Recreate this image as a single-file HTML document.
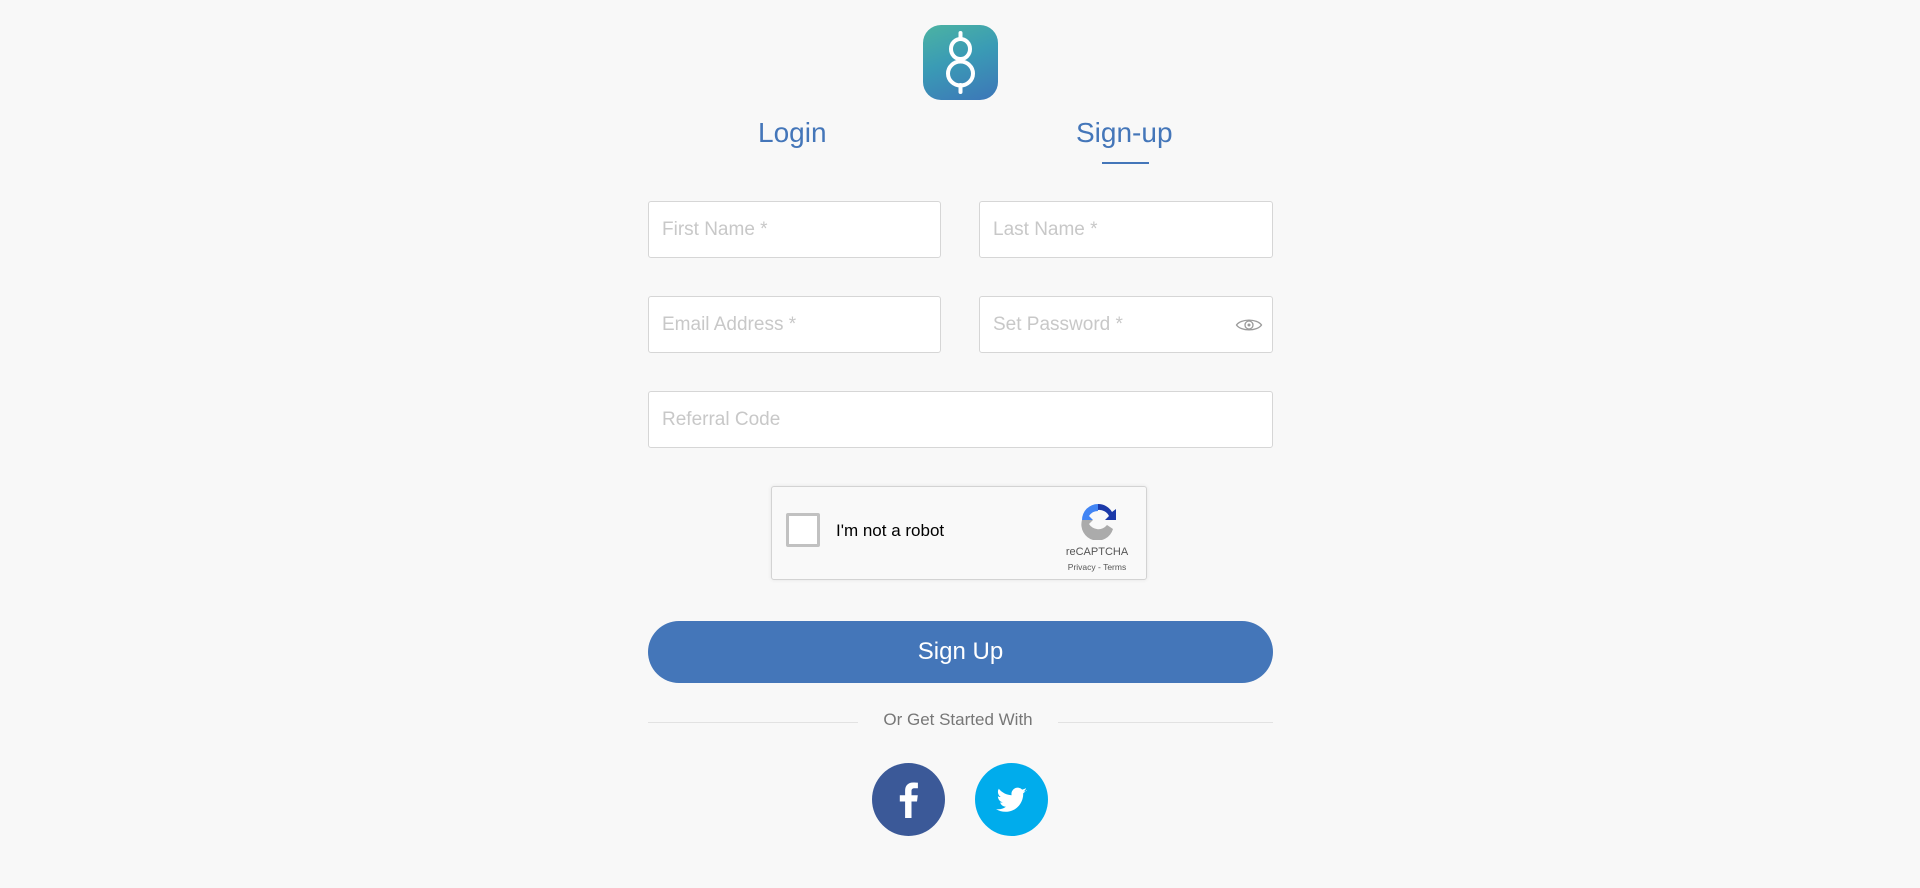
<!DOCTYPE html>
<html><head><meta charset="utf-8">
<style>
*{box-sizing:border-box;margin:0;padding:0}
body{width:1920px;height:888px;background:#f8f8f8;font-family:"Liberation Sans",sans-serif;position:relative;overflow:hidden}
.abs{position:absolute}
.logo{left:923px;top:25px;width:75px;height:75px;border-radius:18px;background:linear-gradient(160deg,#4cb3a2 0%,#3a9bb5 45%,#3d76b8 100%)}
.tab{font-size:28px;color:#4476b9;top:117px}
.inp{background:#fff;border:1px solid #d6d6d6;border-radius:3px;height:57px;padding-left:13px;font-size:19px;color:#c8c8c8;line-height:55px}
.cap{left:771px;top:486px;width:376px;height:94px;border:1px solid #d3d3d3;border-radius:3px;background:#f9f9f9;box-shadow:0 0 4px rgba(0,0,0,.08)}
.btn{left:648px;top:621px;width:625px;height:62px;border-radius:31px;background:#4476b9;color:#fff;font-size:24px;text-align:center;line-height:62px}
.circ{width:73px;height:73px;border-radius:50%;top:763px}
</style></head><body>
<div class="abs logo">
<svg width="75" height="75" viewBox="0 0 75 75"><g fill="none" stroke="#fff" stroke-width="4" stroke-linecap="round"><ellipse cx="37.5" cy="24" rx="9.5" ry="10"/><ellipse cx="37.5" cy="48.5" rx="12.5" ry="12"/><line x1="37.5" y1="8" x2="37.5" y2="14"/><line x1="37.5" y1="60" x2="37.5" y2="67"/></g></svg>
</div>
<div class="abs tab" style="left:758px">Login</div>
<div class="abs tab" style="left:1076px">Sign-up</div>
<div class="abs" style="left:1102px;top:162px;width:47px;height:2px;background:#4476b9"></div>

<div class="abs inp" style="left:648px;top:201px;width:293px">First Name *</div>
<div class="abs inp" style="left:979px;top:201px;width:294px">Last Name *</div>
<div class="abs inp" style="left:648px;top:296px;width:293px">Email Address *</div>
<div class="abs inp" style="left:979px;top:296px;width:294px">Set Password *
<svg class="abs" style="left:255px;top:20px" width="28" height="16" viewBox="0 0 28 16"><path d="M1.5 8C6 1.5 22 1.5 26.5 8C22 14.5 6 14.5 1.5 8Z" fill="none" stroke="#9a9a9a" stroke-width="1.3"/><circle cx="14" cy="8" r="4" fill="none" stroke="#9a9a9a" stroke-width="1.3"/><circle cx="14" cy="8" r="1.5" fill="#9a9a9a"/></svg></div>
<div class="abs inp" style="left:648px;top:391px;width:625px">Referral Code</div>

<div class="abs cap">
<div class="abs" style="left:14px;top:26px;width:34px;height:34px;border:3px solid #c1c1c1;border-radius:2px;background:#fff"></div>
<div class="abs" style="left:64px;top:34px;font-size:17px;color:#000;font-family:'Liberation Sans',sans-serif">I'm not a robot</div>
<svg class="abs" style="left:306px;top:13px" width="40" height="40" viewBox="0 0 40 40"><path d="M20 4a16 16 0 0 1 14 8l4-3v11H27l4-4a11 11 0 0 0-11-6z" fill="#1c3aa9"/><path d="M4 20A16 16 0 0 1 20 4v7a11 11 0 0 0-9 5l4 4H4z" fill="#4285f4"/><path d="M4 20h11l-4 4a11 11 0 0 0 18 1l6 4A16 16 0 0 1 4 20z" fill="#ababab"/></svg>
<div class="abs" style="left:290px;top:59px;width:70px;text-align:center;font-size:11px;color:#555">reCAPTCHA</div>
<div class="abs" style="left:290px;top:75px;width:70px;text-align:center;font-size:8.5px;color:#555">Privacy - Terms</div>
</div>

<div class="abs btn">Sign Up</div>
<div class="abs" style="left:648px;top:722px;width:210px;height:1px;background:#e2e2e2"></div>
<div class="abs" style="left:1058px;top:722px;width:215px;height:1px;background:#e2e2e2"></div>
<div class="abs" style="left:858px;top:710px;width:200px;text-align:center;font-size:17px;color:#777">Or Get Started With</div>

<div class="abs circ" style="left:872px;background:#3b5998">
<svg width="73" height="73" viewBox="0 0 73 73"><path d="M39.5 55V38.5h5.5l.8-6.2h-6.3v-4c0-1.8.5-3 3.1-3h3.3v-5.6c-.6-.1-2.5-.2-4.8-.2-4.7 0-8 2.9-8 8.2v4.6h-5.3v6.2h5.3V55z" fill="#fff"/></svg></div>
<div class="abs circ" style="left:975px;background:#00acec">
<svg width="73" height="73" viewBox="0 0 73 73"><path d="M52 27.5c-1.1.5-2.3.8-3.6 1 1.3-.8 2.3-2 2.7-3.4-1.2.7-2.5 1.2-3.9 1.5a6.2 6.2 0 0 0-10.6 5.6c-5.1-.3-9.7-2.7-12.8-6.5a6.2 6.2 0 0 0 1.9 8.3c-1 0-2-.3-2.8-.8 0 3 2.1 5.5 5 6.1-.9.3-1.9.3-2.8.1.8 2.5 3.1 4.3 5.8 4.3A12.5 12.5 0 0 1 21 46c2.8 1.8 6 2.8 9.5 2.8 11.4 0 17.7-9.5 17.7-17.7v-.8c1.2-.9 2.3-2 3.1-3.2z" fill="#fff"/></svg></div>
</body></html>
